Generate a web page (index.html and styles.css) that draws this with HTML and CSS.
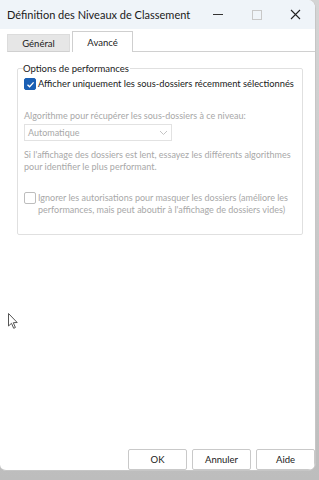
FILE: index.html
```html
<!DOCTYPE html>
<html>
    <head>
        <title>Définition des Niveaux de Classement</title>
        <link rel="stylesheet" href="styles.css">
    </head>
    <body>
        <div class="window">
            <div class="titlebar">
                <span class="title">Définition des Niveaux de Classement</span>
                <div class="controls">
                    <span class="ctl min"><span class="dash"></span></span>
                    <span class="ctl max"><span class="box"></span></span>
                    <span class="ctl close">
                        <svg width="11" height="11" viewBox="0 0 11 11"><path d="M1 1L10 10M10 1L1 10" stroke="#222" stroke-width="1.1"/></svg>
                    </span>
                </div>
            </div>
            <div class="tabs">
                <div class="tab">Général</div>
                <div class="tab active">Avancé</div>
                <div class="tab-fill"></div>
            </div>
            <div class="page">
                <fieldset class="group">
                    <legend>Options de performances</legend>
                    <label class="check">
                        <span class="box checked">
                            <svg width="9" height="9" viewBox="0 0 9 9"><path d="M1.5 4.8L3.6 6.8L7.6 2.4" fill="none" stroke="#fff" stroke-width="1.3"/></svg>
                        </span>
                        <span>Afficher uniquement les sous-dossiers récemment sélectionnés</span>
                    </label>
                    <div class="disabled algo">Algorithme pour récupérer les sous-dossiers à ce niveau:</div>
                    <div class="select disabled">
                        <span>Automatique</span>
                        <svg width="9" height="6" viewBox="0 0 9 6"><path d="M1 1L4.5 4.5L8 1" fill="none" stroke="#c4c4c4" stroke-width="1"/></svg>
                    </div>
                    <div class="disabled hint">Si l'affichage des dossiers est lent, essayez les différents algorithmes pour identifier le plus performant.</div>
                    <label class="check disabled">
                        <span class="box"></span>
                        <span>Ignorer les autorisations pour masquer les dossiers (améliore les performances, mais peut aboutir à l'affichage de dossiers vides)</span>
                    </label>
                </fieldset>
            </div>
            <div class="buttons">
                <button>OK</button>
                <button>Annuler</button>
                <button>Aide</button>
            </div>
        </div>
        <svg class="cursor" width="10" height="17" viewBox="0 0 10 17"><path d="M0.5 0.5L0.5 13L3.5 10.3L5.7 15.3L7.4 14.5L5.3 9.7L9.2 9.5Z" fill="#fff" stroke="#555" stroke-width="1"/></svg>
    </body>
</html>
```

FILE: styles.css
```css
body {
    margin: 0;
    width: 319px;
    height: 480px;
    background: linear-gradient(#d4d4d4, #bdbdbd);
    font-family: 'Lato', 'Noto Sans', sans-serif;
    font-size: 9px;
    color: #1a1a1a;
    position: relative;
    overflow: hidden;
}
.window {
    width: 315px;
    height: 470px;
    background: #fff;
    border: 1px solid #c6c6c6;
    border-left: none;
    border-top: none;
    border-radius: 0 8px 8px 6px;
    display: flex;
    flex-direction: column;
    overflow: hidden;
}
.titlebar {
    height: 29px;
    flex: none;
    background: #eff4f9;
    display: flex;
    align-items: center;
    justify-content: space-between;
    padding-left: 7px;
}
.title {
    font-size: 11px;
}
.controls {
    display: flex;
    height: 100%;
}
.ctl {
    width: 39px;
    display: flex;
    align-items: center;
    justify-content: center;
}
.min .dash {
    width: 10px;
    height: 1px;
    background: #333;
}
.max .box {
    width: 8px;
    height: 8px;
    border: 1px solid #c8c8c8;
}
.tabs {
    display: flex;
    align-items: flex-end;
    height: 23px;
    flex: none;
    padding-left: 7px;
    font-size: 9.5px;
}
.tab {
    height: 16px;
    width: 61px;
    display: flex;
    align-items: center;
    justify-content: center;
    background: #e6e6e6;
    border: 1px solid #dcdcdc;
    border-bottom: 1px solid #d0d0d0;
    margin-right: 2px;
}
.tab.active {
    height: 20px;
    width: 59px;
    background: #fff;
    border-color: #cfcfcf;
    border-bottom: none;
    margin-right: 0;
}
.tab-fill {
    flex: 1;
    border-bottom: 1px solid #d0d0d0;
}
.page {
    flex: 1;
    padding: 10px 12px 0 17px;
}
.group {
    margin: 0;
    padding: 0 6px 18px 6px;
    border: 1px solid #e0e0e0;
    border-radius: 2px;
}
.group legend {
    padding: 0 1px 0 0;
    margin-left: -1px;
    line-height: 13px;
    font-size: 9.5px;
}
.check {
    display: flex;
    align-items: flex-start;
    line-height: 12px;
    margin-top: 3px;
    font-size: 9.3px;
}
.check .box {
    flex: none;
    width: 10px;
    height: 10px;
    margin: 0 2px 0 0;
    border: 1px solid #bdbdbd;
    border-radius: 2px;
    display: flex;
    align-items: center;
    justify-content: center;
}
.check .box.checked {
    background: #1a5fb4;
    border-color: #1a5fb4;
}
.check.disabled {
    margin-top: 19px;
    font-size: 9px;
}
.disabled {
    color: #a8a8a8;
}
.algo {
    margin-top: 20px;
}
.select {
    width: 140px;
    height: 15px;
    margin-top: 3px;
    padding: 0 3px;
    border: 1px solid #e2e2e2;
    display: flex;
    align-items: center;
    justify-content: space-between;
}
.hint {
    margin-top: 8px;
    line-height: 12px;
}
.buttons {
    display: flex;
    justify-content: flex-end;
    gap: 5px;
    flex: none;
    height: 21px;
}
.buttons button {
    width: 59px;
    height: 21px;
    background: #fff;
    border: 1px solid #c9c9c9;
    border-radius: 2px;
    font-family: inherit;
    font-size: 9.5px;
    color: #1a1a1a;
    padding: 0;
}
.cursor {
    position: absolute;
    left: 8px;
    top: 313px;
}
```
